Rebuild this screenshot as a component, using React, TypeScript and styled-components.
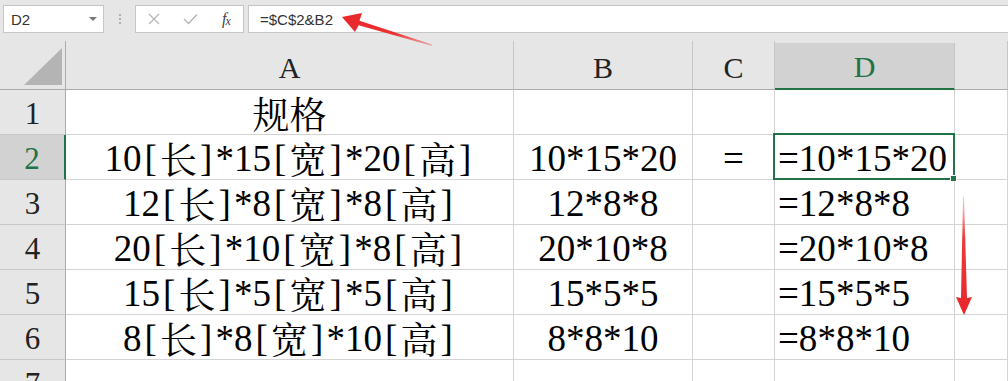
import styled, { createGlobalStyle } from "styled-components";

const GlobalStyle = createGlobalStyle`
  html, body {
    margin: 0;
    padding: 0;
  }
  body {
    background: #e6e6e6;
    overflow: hidden;
  }
`;

const serifStack = `"Liberation Serif", "Noto Serif CJK SC", serif`;

const Page = styled.div`
  position: relative;
  width: 1008px;
  height: 381px;
  overflow: hidden;
  background: #e6e6e6;
`;

/* formula bar */
const FormulaBar = styled.div`
  height: 41px;
  box-sizing: border-box;
  display: flex;
  align-items: flex-start;
  padding: 5px 0 0 3px;
  font-family: "Liberation Sans", Arial, sans-serif;
`;

const NameBox = styled.div`
  width: 101px;
  height: 28px;
  box-sizing: border-box;
  background: #fff;
  border: 1px solid #c6c6c6;
  display: flex;
  align-items: center;
  justify-content: space-between;
  padding: 0 6px 0 7px;
  font-size: 15px;
  color: #333;
`;

const Caret = styled.span`
  width: 0;
  height: 0;
  border-left: 4px solid transparent;
  border-right: 4px solid transparent;
  border-top: 4px solid #777;
`;

const Dots = styled.div`
  width: 31px;
  height: 28px;
  display: flex;
  flex-direction: column;
  align-items: center;
  justify-content: center;
  gap: 2px;

  span {
    width: 2px;
    height: 2px;
    background: #b0b0b0;
  }
`;

const ButtonGroup = styled.div`
  width: 109px;
  height: 28px;
  box-sizing: border-box;
  background: #fff;
  border: 1px solid #c6c6c6;
  display: grid;
  grid-template-columns: repeat(3, 36px);
  align-items: center;
  justify-items: center;
`;

const Fx = styled.span`
  font-family: "Liberation Serif", serif;
  font-style: italic;
  font-size: 16px;
  color: #444;
  letter-spacing: -1px;

  sub {
    font-size: 12px;
    vertical-align: -1px;
  }
`;

const FormulaInput = styled.div`
  flex: 1;
  height: 28px;
  margin-left: 4px;
  box-sizing: border-box;
  background: #fff;
  border: 1px solid #c6c6c6;
  border-right: none;
  display: flex;
  align-items: center;
  padding-left: 11px;
  font-size: 15px;
  color: #333;
`;

/* sheet grid */
const Sheet = styled.div`
  display: grid;
  grid-template-columns: 66px 448px 179px 82px 180px 1fr;
  grid-template-rows: 49px repeat(7, 45px);
  color: #000;
`;

const Corner = styled.div`
  box-sizing: border-box;
  border-right: 1px solid #ababab;
  border-bottom: 1px solid #ababab;
  display: flex;
  align-items: flex-end;
  justify-content: flex-end;
  padding: 0 3px 4px 0;
`;

const ColHeader = styled.div<{ $active?: boolean }>`
  box-sizing: border-box;
  display: flex;
  align-items: flex-end;
  justify-content: center;
  padding-bottom: 1px;
  font-family: ${serifStack};
  font-size: 30px;
  line-height: 40px;
  border-right: 1px solid #c6c6c6;
  border-bottom: ${(p) => (p.$active ? "2px solid #217346" : "1px solid #ababab")};
  color: ${(p) => (p.$active ? "#217346" : "#222")};
  background: ${(p) => (p.$active ? "#d2d2d2" : "#e6e6e6")};
  margin-top: ${(p) => (p.$active ? "2px" : "0")};
`;

const RowHeader = styled.div<{ $active?: boolean }>`
  box-sizing: border-box;
  display: flex;
  align-items: center;
  justify-content: center;
  padding-top: 3px;
  font-family: ${serifStack};
  font-size: 31px;
  border-bottom: 1px solid #c8c8c8;
  border-right: ${(p) => (p.$active ? "2px solid #217346" : "1px solid #ababab")};
  color: ${(p) => (p.$active ? "#217346" : "#222")};
  background: ${(p) => (p.$active ? "#d2d2d2" : "#e6e6e6")};
`;

const Cell = styled.div<{ $align?: "left" | "center"; $selected?: boolean }>`
  position: relative;
  box-sizing: border-box;
  background: #fff;
  border-right: 1px solid #d4d4d4;
  border-bottom: 1px solid #d4d4d4;
  display: flex;
  align-items: center;
  justify-content: ${(p) => (p.$align === "left" ? "flex-start" : "center")};
  padding: 3px 0 0 ${(p) => (p.$align === "left" ? "3px" : "0")};
  font-family: ${serifStack};
  font-size: 37px;
  line-height: 37px;
  white-space: nowrap;
  z-index: ${(p) => (p.$selected ? 2 : 0)};

  ${(p) =>
    p.$selected &&
    `
    &::after {
      content: "";
      position: absolute;
      left: -2px;
      top: -2px;
      right: -1px;
      bottom: -1px;
      border: 2px solid #217346;
      pointer-events: none;
    }
    &::before {
      content: "";
      position: absolute;
      right: -3px;
      bottom: -3px;
      width: 5px;
      height: 5px;
      background: #217346;
      border: 1px solid #fff;
      z-index: 3;
    }
  `}
`;

const Han = styled.span`
  font-family: "Noto Serif CJK SC", serif;
`;

const Bracket = styled.span`
  display: inline-block;
  width: 0.5em;
  text-align: center;
`;

const Star = styled.span`
  vertical-align: -0.15em;
`;

const Annotations = styled.svg`
  position: absolute;
  left: 0;
  top: 0;
  pointer-events: none;
  z-index: 5;
`;

const renderText = (text: string) =>
  text.split(/([\[\]*]|[\u4e00-\u9fff]+)/).map((part, i) => {
    if (part === "[" || part === "]") return <Bracket key={i}>{part}</Bracket>;
    if (part === "*") return <Star key={i}>*</Star>;
    if (/[\u4e00-\u9fff]/.test(part)) return <Han key={i}>{part}</Han>;
    return part;
  });

const columns = ["A", "B", "C", "D", ""];

const rows = [
  { a: "规格", b: "", c: "", d: "" },
  { a: "10[长]*15[宽]*20[高]", b: "10*15*20", c: "=", d: "=10*15*20" },
  { a: "12[长]*8[宽]*8[高]", b: "12*8*8", c: "", d: "=12*8*8" },
  { a: "20[长]*10[宽]*8[高]", b: "20*10*8", c: "", d: "=20*10*8" },
  { a: "15[长]*5[宽]*5[高]", b: "15*5*5", c: "", d: "=15*5*5" },
  { a: "8[长]*8[宽]*10[高]", b: "8*8*10", c: "", d: "=8*8*10" },
  { a: "", b: "", c: "", d: "" },
];

export default function App() {
  return (
    <Page>
      <GlobalStyle />
      <FormulaBar>
        <NameBox>
          <span>D2</span>
          <Caret />
        </NameBox>
        <Dots>
          <span />
          <span />
          <span />
        </Dots>
        <ButtonGroup>
          <svg width="12" height="12" viewBox="0 0 12 12">
            <path d="M1 1 L11 11 M11 1 L1 11" stroke="#b4b4b4" strokeWidth="1.2" fill="none" />
          </svg>
          <svg width="15" height="12" viewBox="0 0 15 12">
            <path d="M1 6 L5.5 10.5 L14 1.5" stroke="#b4b4b4" strokeWidth="1.4" fill="none" />
          </svg>
          <Fx>
            f<sub>x</sub>
          </Fx>
        </ButtonGroup>
        <FormulaInput>=$C$2&amp;B2</FormulaInput>
      </FormulaBar>

      <Sheet>
        <Corner>
          <svg width="38" height="37" viewBox="0 0 38 37">
            <polygon points="38,0 38,37 0,37" fill="#b4b4b4" />
          </svg>
        </Corner>
        {columns.map((c, i) => (
          <ColHeader key={i} $active={c === "D"}>
            {c}
          </ColHeader>
        ))}
        {rows.map((r, i) => (
          <Row key={i} index={i + 1} row={r} />
        ))}
      </Sheet>

      <Annotations width="1008" height="381" viewBox="0 0 1008 381">
        <defs>
          <linearGradient id="downFade" x1="0" y1="0" x2="0" y2="1">
            <stop offset="0" stopColor="#f26b6b" stopOpacity="0.35" />
            <stop offset="0.35" stopColor="#ea3b3b" />
            <stop offset="1" stopColor="#e8262a" />
          </linearGradient>
          <linearGradient id="leftFade" x1="1" y1="1" x2="0" y2="0">
            <stop offset="0" stopColor="#f06060" stopOpacity="0.5" />
            <stop offset="0.4" stopColor="#ea3030" />
            <stop offset="1" stopColor="#e8262a" />
          </linearGradient>
        </defs>
        <polygon
          points="342,17 362,13 359.5,20.8 432,44.6 431.6,45.8 358.6,25.2 355,32"
          fill="url(#leftFade)"
        />
        <polygon
          points="963,197 964,197 967,298 972,297 964,315 956,297 961,298"
          fill="url(#downFade)"
        />
      </Annotations>
    </Page>
  );
}

type RowData = { a: string; b: string; c: string; d: string };

const Row = ({ index, row }: { index: number; row: RowData }) => (
  <>
    <RowHeader $active={index === 2}>{index}</RowHeader>
    <Cell>{renderText(row.a)}</Cell>
    <Cell>{renderText(row.b)}</Cell>
    <Cell>{row.c}</Cell>
    <Cell $align="left" $selected={index === 2}>
      {renderText(row.d)}
    </Cell>
    <Cell />
  </>
);
